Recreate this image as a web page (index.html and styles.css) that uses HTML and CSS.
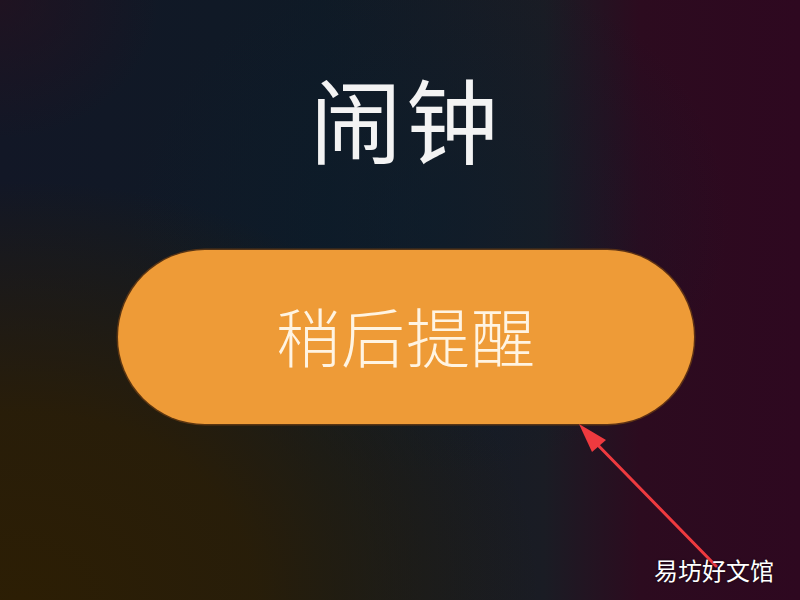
FILE: index.html
```html
<!DOCTYPE html>
<html lang="zh-CN">
<head>
<meta charset="utf-8">
<title>闹钟</title>
<link rel="stylesheet" href="styles.css">
</head>
<body>
<div class="screen">
  <main class="alarm">
    <h1 class="alarm-title">闹钟</h1>
    <button class="snooze-btn">稍后提醒</button>
  </main>
  <svg class="annotation" width="800" height="600" viewBox="0 0 800 600">
    <line x1="716" y1="566" x2="590" y2="437" stroke="#ee3a3f" stroke-width="3" stroke-linecap="round"/>
    <polygon points="579,424 606,440 592,452" fill="#ee3a3f"/>
  </svg>
  <div class="watermark">易坊好文馆</div>
</div>
</body>
</html>
```

FILE: styles.css
```css
html, body {
  margin: 0;
  padding: 0;
}

body {
  width: 800px;
  height: 600px;
  overflow: hidden;
  font-family: "Noto Sans CJK SC", "Noto Sans", sans-serif;
}

.screen {
  position: relative;
  width: 800px;
  height: 600px;
  background:
    radial-gradient(ellipse 520px 420px at 20px 600px, rgba(44, 30, 4, 1) 0%, rgba(44, 30, 4, 0.85) 45%, rgba(44, 30, 4, 0) 100%),
    radial-gradient(ellipse 160px 140px at 0px 0px, rgba(40, 16, 30, 0.6), rgba(40, 16, 30, 0) 100%),
    radial-gradient(ellipse 300px 260px at 430px 220px, rgba(10, 30, 46, 0.5), rgba(10, 30, 46, 0) 100%),
    linear-gradient(90deg, #121726 0%, #0f1a26 40%, #1a1c24 68%, #2c0b1f 80%, #2e0820 100%);
}

.alarm {
  display: flex;
  flex-direction: column;
  align-items: center;
  padding-top: 71px;
  padding-left: 12px;
}

.alarm-title {
  margin: 0;
  font-size: 92px;
  line-height: 92px;
  font-weight: 400;
  color: #f3f3f3;
  letter-spacing: 4px;
}

.snooze-btn {
  margin-top: 87px;
  width: 576px;
  height: 174px;
  border: none;
  border-radius: 87px;
  background: #ee9b37;
  box-shadow: 0 0 0 1.5px rgba(110, 62, 18, 0.75);
  color: #fff4e2;
  font-family: "Noto Sans CJK SC", "Noto Sans", sans-serif;
  font-size: 64px;
  font-weight: 300;
  line-height: 1;
  padding: 0 0 6px 0;
  letter-spacing: 1px;
}

.annotation {
  position: absolute;
  left: 0;
  top: 0;
}

.watermark {
  position: absolute;
  left: 654px;
  top: 552px;
  font-size: 24px;
  line-height: 36px;
  color: #ffffff;
  text-shadow: 0 0 2px rgba(0, 0, 0, 0.8);
}
```
